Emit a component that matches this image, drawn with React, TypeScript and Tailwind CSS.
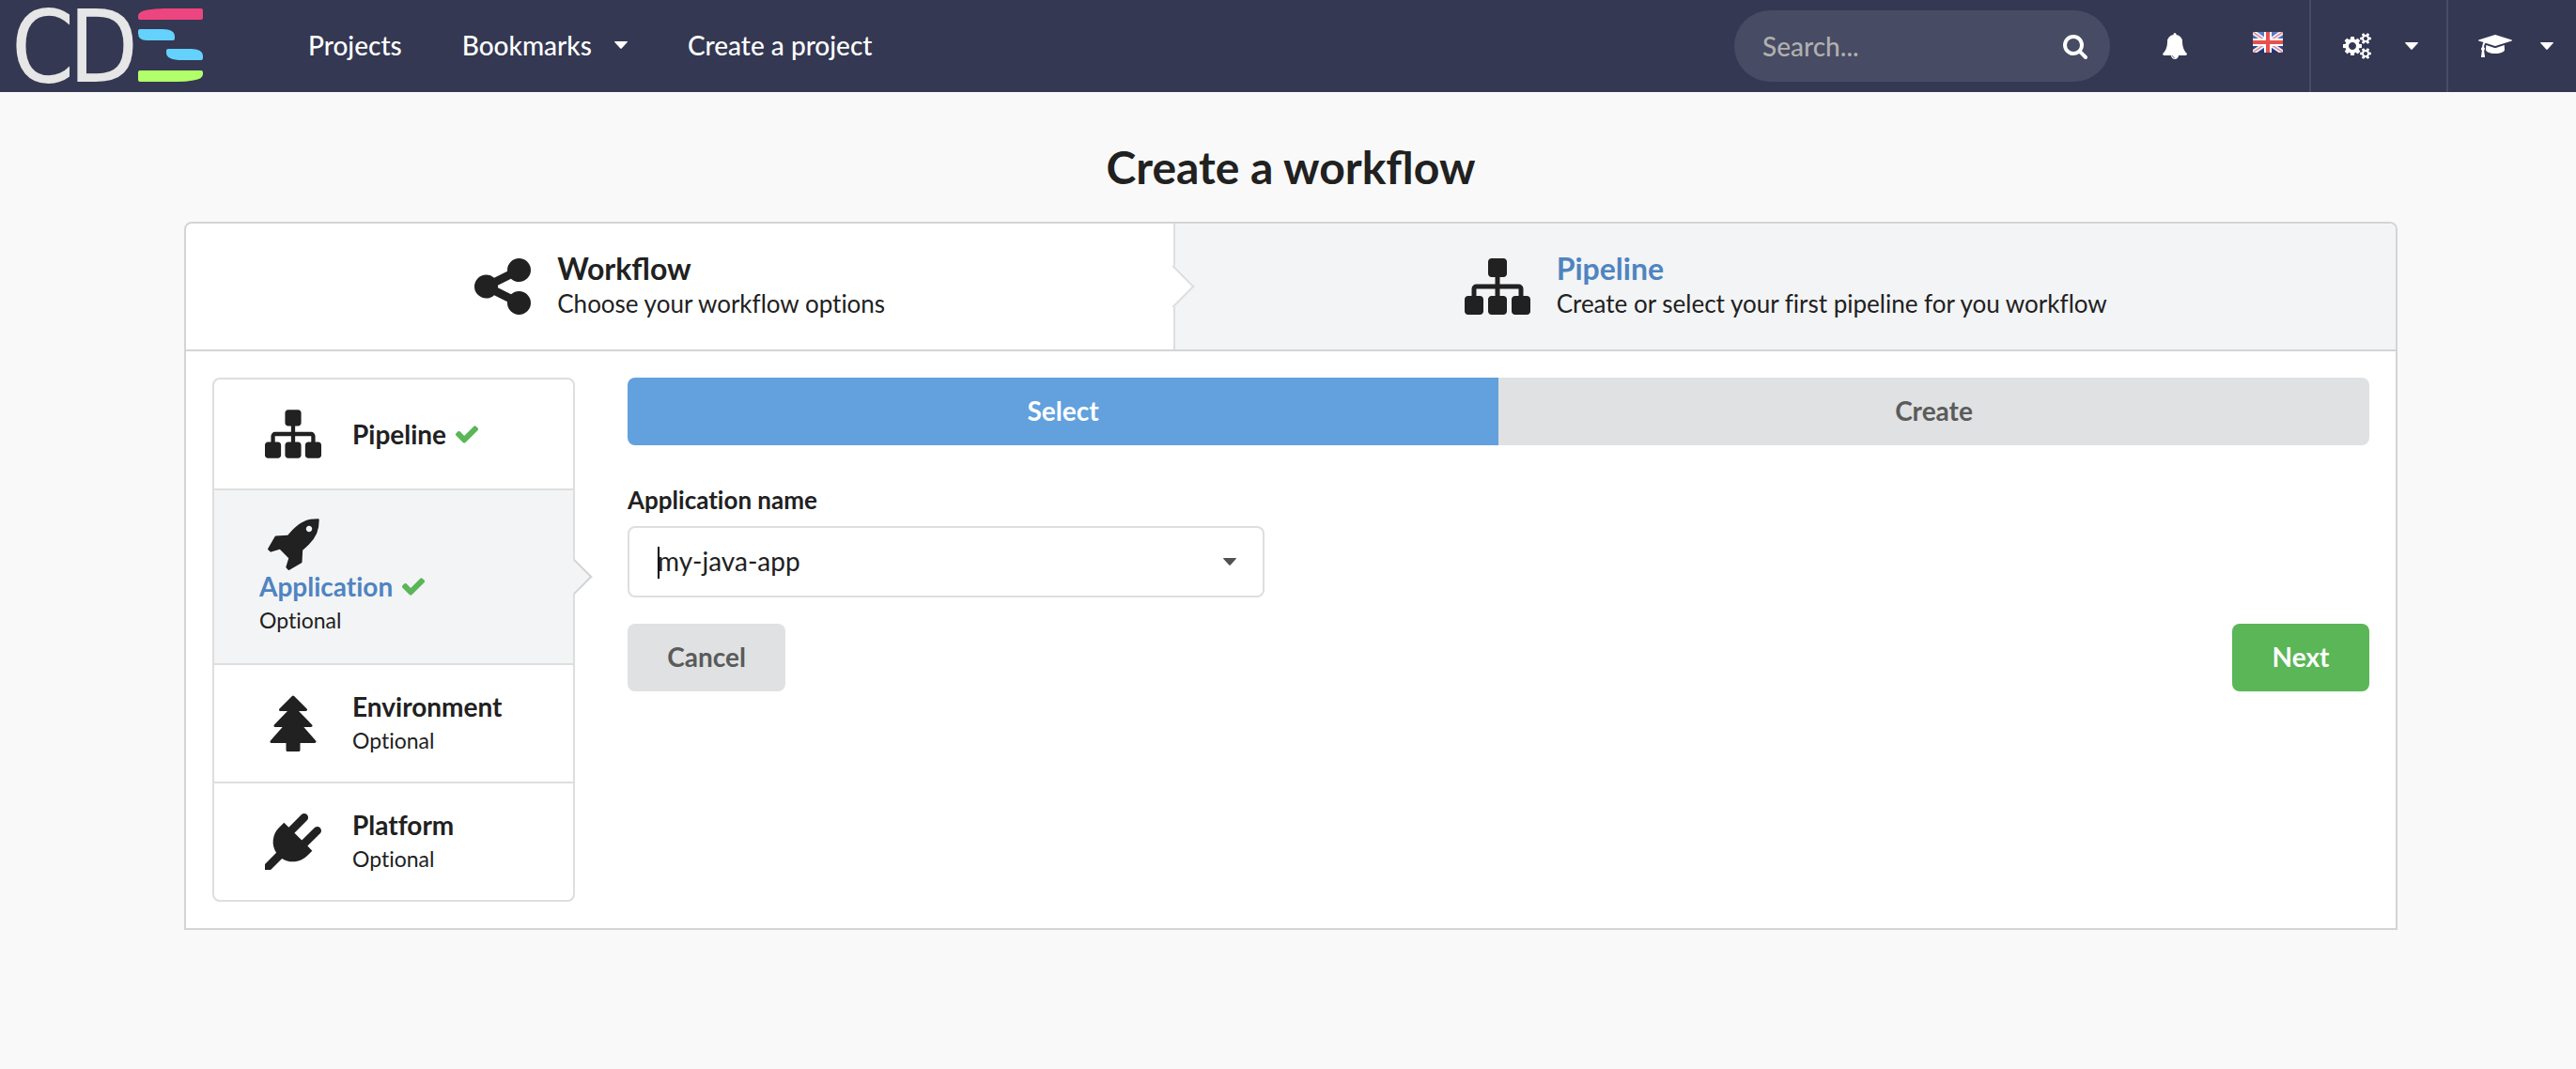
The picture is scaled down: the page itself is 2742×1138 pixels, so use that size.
import type { ReactNode } from 'react';

type IconProps = { className: string; d: string; viewBox?: string };

function Glyph({ className, d, viewBox = '0 0 1792 1792' }: IconProps) {
  return (
    <svg viewBox={viewBox} className={className} fill="currentColor" aria-hidden="true">
      <path d={d} />
    </svg>
  );
}

const SITEMAP =
  'M1792 1248v320q0 40-28 68t-68 28h-320q-40 0-68-28t-28-68v-320q0-40 28-68t68-28h96v-192h-512v192h96q40 0 68 28t28 68v320q0 40-28 68t-68 28h-320q-40 0-68-28t-28-68v-320q0-40 28-68t68-28h96v-192h-512v192h96q40 0 68 28t28 68v320q0 40-28 68t-68 28h-320q-40 0-68-28t-28-68v-320q0-40 28-68t68-28h96v-192q0-52 38-90t90-38h512v-192h-96q-40 0-68-28t-28-68v-320q0-40 28-68t68-28h320q40 0 68 28t28 68v320q0 40-28 68t-68 28h-96v192h512q52 0 90 38t38 90v192h96q40 0 68 28t28 68z';
const SHARE =
  'M1344 1024q133 0 226.5 93.5t93.5 226.5-93.5 226.5-226.5 93.5-226.5-93.5-93.5-226.5q0-12 2-34l-360-180q-92 86-218 86-133 0-226.5-93.5t-93.5-226.5 93.5-226.5 226.5-93.5q126 0 218 86l360-180q-2-22-2-34 0-133 93.5-226.5t226.5-93.5 226.5 93.5 93.5 226.5-93.5 226.5-226.5 93.5q-126 0-218-86l-360 180q2 22 2 34t-2 34l360 180q92-86 218-86z';
const SEARCH =
  'M1216 832q0-185-131.5-316.5t-316.5-131.5-316.5 131.5-131.5 316.5 131.5 316.5 316.5 131.5 316.5-131.5 131.5-316.5zm512 832q0 52-38 90t-90 38q-54 0-90-38l-343-342q-179 124-399 124-143 0-273.5-55.5t-225-150-150-225-55.5-273.5 55.5-273.5 150-225 225-150 273.5-55.5 273.5 55.5 225 150 150 225 55.5 273.5q0 220-124 399l343 343q37 37 37 90z';
const BELL =
  'M912 1696q0-16-16-16-59 0-101.5-42.5t-42.5-101.5q0-16-16-16t-16 16q0 73 51.5 124.5t124.5 51.5q16 0 16-16zm816-288q0 52-38 90t-90 38h-448q0 106-75 181t-181 75-181-75-75-181h-448q-52 0-90-38t-38-90q50-42 91-88t85-119.5 74.5-158.5 50-206 19.5-260q0-152 117-282.5t307-158.5q-8-19-8-39 0-40 28-68t68-28 68 28 28 68q0 20-8 39 190 28 307 158.5t117 282.5q0 139 19.5 260t50 206 74.5 158.5 85 119.5 91 88z';
const CHECK =
  'M1671 566q0 40-28 68l-724 724-136 136q-28 28-68 28t-68-28l-136-136-362-362q-28-28-28-68t28-68l136-136q28-28 68-28t68 28l294 295 656-657q28-28 68-28t68 28l136 136q28 28 28 68z';
const ROCKET =
  'M1440 448q0-40-28-68t-68-28-68 28-28 68 28 68 68 28 68-28 28-68zm224-288q0 249-75.5 430.5t-253.5 360.5q-81 80-195 176l-20 379q-2 16-16 26l-384 224q-7 4-16 4-12 0-23-9l-64-64q-13-14-8-32l85-276-281-281-276 85q-3 1-9 1-14 0-23-9l-64-64q-17-19-5-39l224-384q10-14 26-16l379-20q96-114 176-195 188-187 358-258t431-71q14 0 24 9.5t10 22.5z';
const PLUG =
  'M1755 453q37 38 37 90.5t-37 90.5l-401 400 150 150-160 160q-163 163-389.5 186.5t-411.5-100.5l-362 362h-181v-181l362-362q-124-185-100.5-411.5t186.5-389.5l160-160 150 150 400-401q38-37 91-37t90 37 37 90.5-37 90.5l-400 401 234 234 401-400q38-37 91-37t90 37z';
const COGS =
  'M896 896q0-106-75-181t-181-75-181 75-75 181 75 181 181 75 181-75 75-181zm768 512q0-52-38-90t-90-38-90 38-38 90q0 53 37.5 90.5t90.5 37.5 90.5-37.5 37.5-90.5zm0-1024q0-52-38-90t-90-38-90 38-38 90q0 53 37.5 90.5t90.5 37.5 90.5-37.5 37.5-90.5zm-384 421v185q0 10-7 19.5t-16 10.5l-155 24q-11 35-32 76 34 48 90 115 7 11 7 20 0 12-7 19-23 30-82.5 89.5t-78.5 59.5q-11 0-21-7l-115-90q-37 19-77 31-11 108-23 155-7 24-30 24h-186q-11 0-20-7.5t-10-17.5l-23-153q-34-10-75-31l-118 89q-7 7-20 7-11 0-21-8-144-133-144-160 0-9 7-19 10-14 41-53t47-61q-23-44-35-82l-152-24q-10-1-17-9.5t-7-19.5v-185q0-10 7-19.5t16-10.5l155-24q11-35 32-76-34-48-90-115-7-11-7-20 0-12 7-20 22-30 82-89t79-59q11 0 21 7l115 90q34-18 77-32 11-108 23-154 7-24 30-24h186q11 0 20 7.5t10 17.5l23 153q34 10 75 31l118-89q8-7 20-7 11 0 21 8 144 133 144 160 0 8-7 19-12 16-42 54t-45 60q23 48 34 82l152 23q10 2 17 10.5t7 19.5zm640 533v140q0 16-149 31-12 27-30 52 51 113 51 138 0 4-4 7-122 71-124 71-8 0-46-47t-52-68q-20 2-30 2t-30-2q-14 21-52 68t-46 47q-2 0-124-71-4-3-4-7 0-25 51-138-18-25-30-52-149-15-149-31v-140q0-16 149-31 13-29 30-52-51-113-51-138 0-4 4-7 4-2 35-20t59-34 30-16q8 0 46 46.5t52 67.5q20-2 30-2t30 2q51-71 92-112l6-2q4 0 124 70 4 3 4 7 0 25-51 138 17 23 30 52 149 15 149 31zm0-1024v140q0 16-149 31-12 27-30 52 51 113 51 138 0 4-4 7-122 71-124 71-8 0-46-47t-52-68q-20 2-30 2t-30-2q-14 21-52 68t-46 47q-2 0-124-71-4-3-4-7 0-25 51-138-18-25-30-52-149-15-149-31v-140q0-16 149-31 13-29 30-52-51-113-51-138 0-4 4-7 4-2 35-20t59-34 30-16q8 0 46 46.5t52 67.5q20-2 30-2t30 2q51-71 92-112l6-2q4 0 124 70 4 3 4 7 0 25-51 138 17 23 30 52 149 15 149 31z';
const GRADUATION =
  'M1774 836l18 316q4 69-82 128t-235 93.5-323 34.5-323-34.5-235-93.5-82-128l18-316 574 181q22 7 48 7t48-7zm530-324q0 23-22 31l-1120 352q-4 1-10 1t-10-1l-652-206q-43 34-71 111.5t-34 178.5q63 36 63 109 0 69-58 107l58 433q2 14-8 25-9 11-24 11h-192q-15 0-24-11-10-11-8-25l58-433q-58-38-58-107 0-73 65-111 11-207 98-330l-333-104q-22-8-22-31t22-31l1120-352q4-1 10-1t10 1l1120 352q22 8 22 31z';

function Tree({ className }: { className: string }) {
  return (
    <svg viewBox="0 0 60 60" className={className} fill="currentColor" aria-hidden="true">
      <path
        d="M30 2L43.5 15.500H32.500L49 32.500H38L53 49.500H36V58.500H24V49.500H7L22 32.500H11L27.500 15.500H16.500Z"
        stroke="currentColor"
        strokeWidth="3"
        strokeLinejoin="round"
      />
    </svg>
  );
}

function Caret({ className }: { className: string }) {
  return (
    <svg viewBox="0 0 14 8" className={className} fill="currentColor" aria-hidden="true">
      <path d="M.6 0H13.4Q14.300.4 13.700 1L7.700 7.600Q7 8.200 6.300 7.600L.3 1Q-.3.4.6 0Z" />
    </svg>
  );
}

function Logo() {
  return (
    <svg viewBox="0 0 216 98" className="h-[98px] w-[216px] overflow-visible" role="img" aria-label="CDS">
      <text
        x="12 73"
        y="87"
        fill="#e6e6e6"
        fontFamily="'DejaVu Sans Condensed', 'Noto Sans', sans-serif"
        fontSize="107"
      >
        CD
      </text>
      <path fill="#ed457f" d="M214 9q2 0 2 2v8q0 2-2 2h-65q-2 0-2-2v-2q0-5 10-6.500 8-1.500 18-1.500z" />
      <path fill="#65d1fd" d="M149 31h24q13 0 13 8v2q0 2-2 2h-28q-9 0-9-8v-2q0-2 2-2z" />
      <path fill="#65d1fd" d="M179 52h24q13 0 13 8v2q0 2-2 2h-20q-17 0-17-8v-2q0-2 2-2z" />
      <path fill="#b1ff6b" d="M149 75h65q2 0 2 2v2q0 5-10 6.500-8 1.500-18 1.500h-39q-2 0-2-2v-8q0-2 2-2z" />
    </svg>
  );
}

function Flag() {
  return (
    <svg viewBox="0 0 32 22" className="mb-2 h-[22px] w-8" role="img" aria-label="English">
      <defs>
        <linearGradient id="flagBlue" x1="0" y1="0" x2="0" y2="1">
          <stop offset="0" stopColor="#5f7fc8" />
          <stop offset="1" stopColor="#1c2f7c" />
        </linearGradient>
      </defs>
      <rect width="32" height="22" fill="url(#flagBlue)" />
      <path d="M0 0L32 22M32 0L0 22" stroke="#eef0f8" strokeWidth="5" />
      <path d="M0 0L32 22M32 0L0 22" stroke="#e58a90" strokeWidth="1.500" />
      <path d="M16 0V22M0 11H32" stroke="#fff" strokeWidth="8" />
      <path d="M16 0V22M0 11H32" stroke="#e8504f" strokeWidth="4" />
    </svg>
  );
}

type SideStepProps = {
  icon: ReactNode;
  title: string;
  optional?: boolean;
  done?: boolean;
  className: string;
};

function SideStep({ icon, title, optional, done, className }: SideStepProps) {
  return (
    <li>
      <button type="button" className={`flex w-full items-center gap-7 px-12 text-left ${className}`}>
        <span className="flex w-[71px] shrink-0 justify-center">{icon}</span>
        <span>
          <span className="flex items-center gap-2 leading-9 font-bold">
            {title}
            {done && <Glyph d={CHECK} className="size-7 text-[#5ab657]" />}
          </span>
          {optional && <span className="block text-[23px] leading-9">Optional</span>}
        </span>
      </button>
    </li>
  );
}

export default function App() {
  return (
    <div className="min-h-screen bg-[#f9f9f9] font-['Lato',sans-serif] text-[28px] leading-9 text-[#212121] [font-variant-ligatures:no-common-ligatures]">
      <header className="flex h-[98px] items-center bg-[#343852] text-white">
        <a href="#home"><Logo /></a>
        <nav className="ml-28 flex items-center pb-0.5 font-medium">
          <a href="#projects" className="mr-16">Projects</a>
          <button type="button" className="mr-16 flex items-center gap-6">
            Bookmarks
            <Caret className="h-2 w-3.5" />
          </button>
          <a href="#create">Create a project</a>
        </nav>
        <form className="ml-auto flex h-19 w-[400px] items-center rounded-full bg-[#474b63] pr-[23px] pl-[30px]">
          <input
            type="search"
            aria-label="Search"
            placeholder="Search..."
            className="min-w-0 flex-1 bg-transparent font-medium outline-none placeholder:text-[#b0b0b0]"
          />
          <button type="button" aria-label="Run search">
            <Glyph d={SEARCH} className="size-7" />
          </button>
        </form>
        <button type="button" aria-label="Notifications" className="ml-[55px]">
          <Glyph d={BELL} className="size-7" />
        </button>
        <button type="button" aria-label="Language" className="mr-7 ml-[69px]">
          <Flag />
        </button>
        <button type="button" aria-label="Settings" className="flex h-full items-center gap-9 border-l-2 border-[#474b63] pr-[30px] pl-[34px]">
          <Glyph d={COGS} viewBox="0 0 1920 1792" className="h-7 w-[30px]" />
          <Caret className="h-2 w-3.5" />
        </button>
        <button type="button" aria-label="Help" className="flex h-full items-center gap-[30px] border-l-2 border-[#474b63] pr-6 pl-8">
          <Glyph d={GRADUATION} viewBox="0 0 2304 1792" className="h-7 w-9" />
          <Caret className="h-2 w-3.5" />
        </button>
      </header>

      <main className="pt-12 pr-[190px] pl-[196px]">
        <h1 className="text-center text-[48px] leading-16 font-bold [font-variant-ligatures:normal]">Create a workflow</h1>

        <ol className="mt-[26px] flex rounded-t-lg border-2 border-[#d4d4d5] bg-white">
          <li className="relative flex flex-auto items-center justify-center gap-7 rounded-tl-md py-7">
            <span className="absolute top-1/2 -right-4 z-10 size-8 -translate-y-1/2 rotate-45 border-t-2 border-r-2 border-[#dedede] bg-white" />
            <Glyph d={SHARE} viewBox="128 0 1536 1792" className="h-[70px] w-[60px]" />
            <div className="pb-1">
              <h2 className="text-[32px] leading-10 font-bold [font-variant-ligatures:normal]">Workflow</h2>
              <p className="text-[26px] leading-[34px]">Choose your workflow options</p>
            </div>
          </li>
          <li className="flex flex-auto items-center justify-center gap-7 rounded-tr-md border-l-2 border-[#dedede] bg-[#f3f4f5] py-7">
            <Glyph d={SITEMAP} className="size-[70px]" />
            <div className="pb-1">
              <h2 className="text-[32px] leading-10 font-bold text-[#4f84c1]">Pipeline</h2>
              <p className="text-[26px] leading-[34px]">Create or select your first pipeline for you workflow</p>
            </div>
          </li>
        </ol>

        <section className="flex items-start gap-14 border-2 border-t-0 border-[#d4d4d5] bg-white p-7">
          <ul className="w-[386px] shrink-0 divide-y-2 divide-[#dedede] rounded-lg border-2 border-[#dedede]">
            <SideStep title="Pipeline" done className="h-29" icon={<Glyph d={SITEMAP} className="size-[60px]" />} />
            <li className="relative">
              <button type="button" className="flex h-46 w-full flex-col bg-[#f3f4f5] px-12 pt-[26px] text-left">
                <span className="flex w-[71px] justify-center pl-1">
                  <Glyph d={ROCKET} className="size-[60px]" />
                </span>
                <span className="flex items-center gap-2 leading-8 font-bold text-[#4f84c1]">
                  Application
                  <Glyph d={CHECK} className="size-7 text-[#5ab657]" />
                </span>
                <span className="text-[23px] leading-10">Optional</span>
              </button>
              <span className="absolute top-1/2 -right-[15px] size-[27px] -translate-y-1/2 rotate-45 border-t-2 border-r-2 border-[#d4d4d5] bg-[#f3f4f5]" />
            </li>
            <SideStep title="Environment" optional className="h-31" icon={<Tree className="size-[60px]" />} />
            <SideStep title="Platform" optional className="h-31" icon={<Glyph d={PLUG} className="size-[60px]" />} />
          </ul>

          <form className="min-w-0 flex-1">
            <div className="flex overflow-hidden rounded-lg font-bold">
              <button type="button" className="h-18 flex-1 bg-[#62a1de] pb-0.5 text-white">Select</button>
              <button type="button" className="h-18 flex-1 bg-[#e0e1e2] pb-0.5 text-[#5a5b5b]">Create</button>
            </div>
            <label htmlFor="application" className="mt-10 block text-[26px] leading-9 font-bold">
              Application name
            </label>
            <div className="relative mt-2.5 w-[678px]">
              <select
                id="application"
                defaultValue="my-java-app"
                className="h-19 w-full appearance-none rounded-lg border-2 border-[#dedede] bg-white px-[30px] pb-0.5 outline-none"
              >
                <option>my-java-app</option>
              </select>
              <span className="absolute top-[22px] left-8 h-[34px] w-0.5 bg-black" />
              <Caret className="pointer-events-none absolute top-[34px] right-[30px] h-2 w-3.5 text-[#515151]" />
            </div>
            <div className="mt-7 flex justify-between font-bold">
              <button type="button" className="h-18 w-[168px] rounded-lg bg-[#e0e1e2] pb-0.5 text-[#5a5b5b]">Cancel</button>
              <button type="button" className="h-18 w-[146px] rounded-lg bg-[#5ab657] pb-0.5 text-white">Next</button>
            </div>
          </form>
        </section>
      </main>
    </div>
  );
}
